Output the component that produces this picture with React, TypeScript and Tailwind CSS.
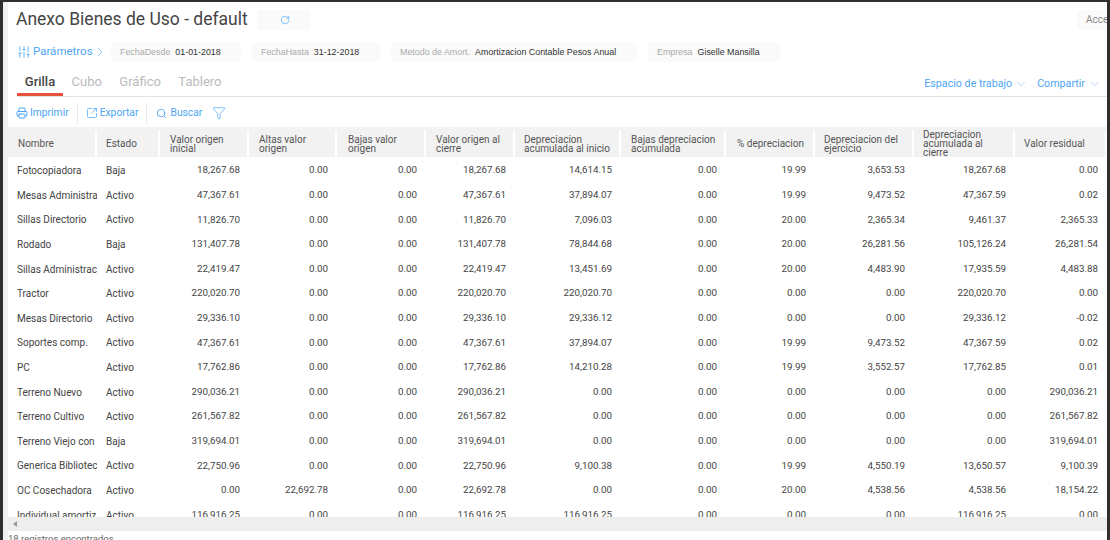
import {
  ChevronDown,
  ChevronRight,
  Filter,
  Printer,
  RotateCw,
  Search,
  SlidersVertical,
  SquareArrowOutUpRight,
} from "lucide-react";

const columns = [
  { name: "Nombre", pad: "pl-[8px]" },
  { name: "Estado", pad: "pl-[9px]" },
  { name: "Valor origen inicial", pad: "pl-[10px]" },
  { name: "Altas valor origen", pad: "pl-[10px]" },
  { name: "Bajas valor origen", pad: "pl-[11px]" },
  { name: "Valor origen al cierre", pad: "pl-[10px]" },
  { name: "Depreciacion acumulada al inicio", pad: "pl-[9px]" },
  { name: "Bajas depreciacion acumulada", pad: "pl-[10px]" },
  { name: "% depreciacion", pad: "pl-[11px]" },
  { name: "Depreciacion del ejercicio", pad: "pl-[9px]" },
  { name: "Depreciacion acumulada al cierre", pad: "pl-[9px] pr-[18px]" },
  { name: "Valor residual", pad: "pl-[9px]" },
];

const rows = [
  ["Fotocopiadora", "Baja", "18,267.68", "0.00", "0.00", "18,267.68", "14,614.15", "0.00", "19.99", "3,653.53", "18,267.68", "0.00"],
  ["Mesas Administra", "Activo", "47,367.61", "0.00", "0.00", "47,367.61", "37,894.07", "0.00", "19.99", "9,473.52", "47,367.59", "0.02"],
  ["Sillas Directorio", "Activo", "11,826.70", "0.00", "0.00", "11,826.70", "7,096.03", "0.00", "20.00", "2,365.34", "9,461.37", "2,365.33"],
  ["Rodado", "Baja", "131,407.78", "0.00", "0.00", "131,407.78", "78,844.68", "0.00", "20.00", "26,281.56", "105,126.24", "26,281.54"],
  ["Sillas Administrac", "Activo", "22,419.47", "0.00", "0.00", "22,419.47", "13,451.69", "0.00", "20.00", "4,483.90", "17,935.59", "4,483.88"],
  ["Tractor", "Activo", "220,020.70", "0.00", "0.00", "220,020.70", "220,020.70", "0.00", "0.00", "0.00", "220,020.70", "0.00"],
  ["Mesas Directorio", "Activo", "29,336.10", "0.00", "0.00", "29,336.10", "29,336.12", "0.00", "0.00", "0.00", "29,336.12", "-0.02"],
  ["Soportes comp.", "Activo", "47,367.61", "0.00", "0.00", "47,367.61", "37,894.07", "0.00", "19.99", "9,473.52", "47,367.59", "0.02"],
  ["PC", "Activo", "17,762.86", "0.00", "0.00", "17,762.86", "14,210.28", "0.00", "19.99", "3,552.57", "17,762.85", "0.01"],
  ["Terreno Nuevo", "Activo", "290,036.21", "0.00", "0.00", "290,036.21", "0.00", "0.00", "0.00", "0.00", "0.00", "290,036.21"],
  ["Terreno Cultivo", "Activo", "261,567.82", "0.00", "0.00", "261,567.82", "0.00", "0.00", "0.00", "0.00", "0.00", "261,567.82"],
  ["Terreno Viejo con .", "Baja", "319,694.01", "0.00", "0.00", "319,694.01", "0.00", "0.00", "0.00", "0.00", "0.00", "319,694.01"],
  ["Generica Bibliotec", "Activo", "22,750.96", "0.00", "0.00", "22,750.96", "9,100.38", "0.00", "19.99", "4,550.19", "13,650.57", "9,100.39"],
  ["OC Cosechadora", "Activo", "0.00", "22,692.78", "0.00", "22,692.78", "0.00", "0.00", "20.00", "4,538.56", "4,538.56", "18,154.22"],
  ["Individual amortiz", "Activo", "116,916.25", "0.00", "0.00", "116,916.25", "116,916.25", "0.00", "0.00", "0.00", "116,916.25", "0.00"],
];

const params = [
  { label: "FechaDesde", value: "01-01-2018", width: "w-[130px]" },
  { label: "FechaHasta", value: "31-12-2018", width: "w-[128px]" },
  { label: "Metodo de Amort.", value: "Amortizacion Contable Pesos Anual", width: "w-[246px]" },
  { label: "Empresa", value: "Giselle Mansilla", width: "w-[132px]" },
];

const gridCols =
  "grid grid-cols-[87px_63px_89px_88px_89px_89px_106px_105px_89px_99px_101px_92px]";

export default function App() {
  return (
    <div className="h-[540px] w-[1110px] overflow-hidden flex bg-[#2f2f2f] pt-[2px] pl-[3px] pr-[3px] font-['Roboto',sans-serif]">
      <div className="flex-1 min-w-0 bg-[#f1f1f1] pl-[5px]">
        <div className="h-full bg-white flex flex-col overflow-hidden">
          {/* title */}
          <div className="h-[35px] flex items-center pl-2 shrink-0">
            <h1 className="text-[17.5px] leading-none text-[#444]">
              Anexo Bienes de Uso - default
            </h1>
            <div className="ml-[9px] w-[53px] h-5 rounded bg-[#fafafa] flex items-center justify-center">
              <RotateCw size={10} strokeWidth={1.75} className="ml-[3px] text-[#55aaf5]" />
            </div>
            <div className="ml-auto w-[30px] h-5 rounded-l bg-[#fafafa] pl-[9px] text-[10px] leading-5 text-[#888] overflow-hidden whitespace-nowrap">
              Acceso
            </div>
          </div>

          {/* parametros */}
          <div className="h-[30px] flex items-center pl-[9px] shrink-0">
            <div className="w-[94px] flex items-center text-[#4ea5f5] text-[11.5px]">
              <SlidersVertical size={14} strokeWidth={1.5} />
              <span className="ml-[2px]">Parámetros</span>
              <ChevronRight size={14} strokeWidth={1.25} />
            </div>
            <div className="flex gap-[11px]">
              {params.map((p) => (
                <div
                  key={p.label}
                  className={`${p.width} h-5 rounded bg-[#fafafa] flex items-center pl-[9px] pt-px text-[8.9px] font-['Liberation_Sans',sans-serif] whitespace-nowrap`}
                >
                  <span className="text-[#aaa]">{p.label}</span>
                  <span className="ml-[5px] text-[#333]">{p.value}</span>
                </div>
              ))}
            </div>
          </div>

          {/* tabs */}
          <div className="h-[30px] ml-[9px] flex items-stretch border-b border-[#e2e2e2] shrink-0">
            <div className="flex items-stretch gap-[17.5px] text-[13px]">
              <span className="w-[46px] border-b-[3px] border-[#e8523a] text-center font-medium text-[#444] pt-[5px]">
                Grilla
              </span>
              <span className="text-[#bbb] -ml-[9px] pt-[5px]">Cubo</span>
              <span className="text-[#bbb] pt-[5px]">Gráfico</span>
              <span className="text-[#bbb] pt-[5px]">Tablero</span>
            </div>
            <div className="ml-auto flex items-start pt-[9px] pr-[5px] text-[10.7px] text-[#4ea5f5]">
              <span>Espacio de trabajo</span>
              <ChevronDown size={14} strokeWidth={1} className="ml-[2px] mt-[1px] text-[#7ab8f0]" />
              <span className="ml-[9px]">Compartir</span>
              <ChevronDown size={14} strokeWidth={1} className="ml-[3px] mt-[1px] text-[#7ab8f0]" />
            </div>
          </div>

          {/* toolbar */}
          <div className="h-[30px] ml-[8px] pt-[2px] flex items-center text-[10.3px] text-[#4ea5f5] shrink-0">
            <Printer size={12} className="shrink-0" />
            <span className="ml-[2px]">Imprimir</span>
            <span className="ml-[8px] h-5 w-px bg-[#e8e8e8]" />
            <SquareArrowOutUpRight size={12} strokeWidth={1.5} className="ml-[8px]" />
            <span className="ml-[2px]">Exportar</span>
            <span className="ml-[8px] h-5 w-px bg-[#e8e8e8]" />
            <Search size={11} strokeWidth={2} className="ml-[9px]" />
            <span className="ml-[3px]">Buscar</span>
            <Filter size={14} strokeWidth={1.25} className="ml-[10px]" />
          </div>

          {/* tabla */}
          <div className="flex-1 min-h-0 flex flex-col bg-[#f3f3f3] pt-[3px]">
            <div className={`${gridCols} h-[27px] ml-[2px] shrink-0 bg-[#f2f2f2] text-[10px] leading-[9px] text-[#555]`}>
              {columns.map((c) => (
                <div
                  key={c.name}
                  className={`flex items-center border-r-2 border-white ${c.pad}`}
                >
                  {c.name}
                </div>
              ))}
            </div>
            <div className="h-[360px] bg-white pl-[2px] pt-[1.5px] overflow-hidden shrink-0">
              {rows.map((r) => (
                <div
                  key={r[0]}
                  className={`${gridCols} h-[24.6px] items-center text-[10px] text-[#444] whitespace-nowrap`}
                >
                  {r.map((v, i) => (
                    <div
                      key={i}
                      className={`overflow-hidden ${i === 0 ? "pl-[7px]" : i === 1 ? "pl-[9px]" : "text-right pr-[9px] text-[9.8px]"}`}
                    >
                      {v}
                    </div>
                  ))}
                </div>
              ))}
            </div>
            {/* scroll */}
            <div className="h-[14px] shrink-0 bg-[#eeeeee] flex items-center pl-[5px]">
              <span className="w-0 h-0 border-y-[3px] border-y-transparent border-r-[4px] border-r-[#999]" />
            </div>
            <div className="flex-1 bg-white text-[9.5px] leading-[15px] text-[#666] whitespace-nowrap">
              18 registros encontrados
            </div>
          </div>
        </div>
      </div>
    </div>
  );
}
